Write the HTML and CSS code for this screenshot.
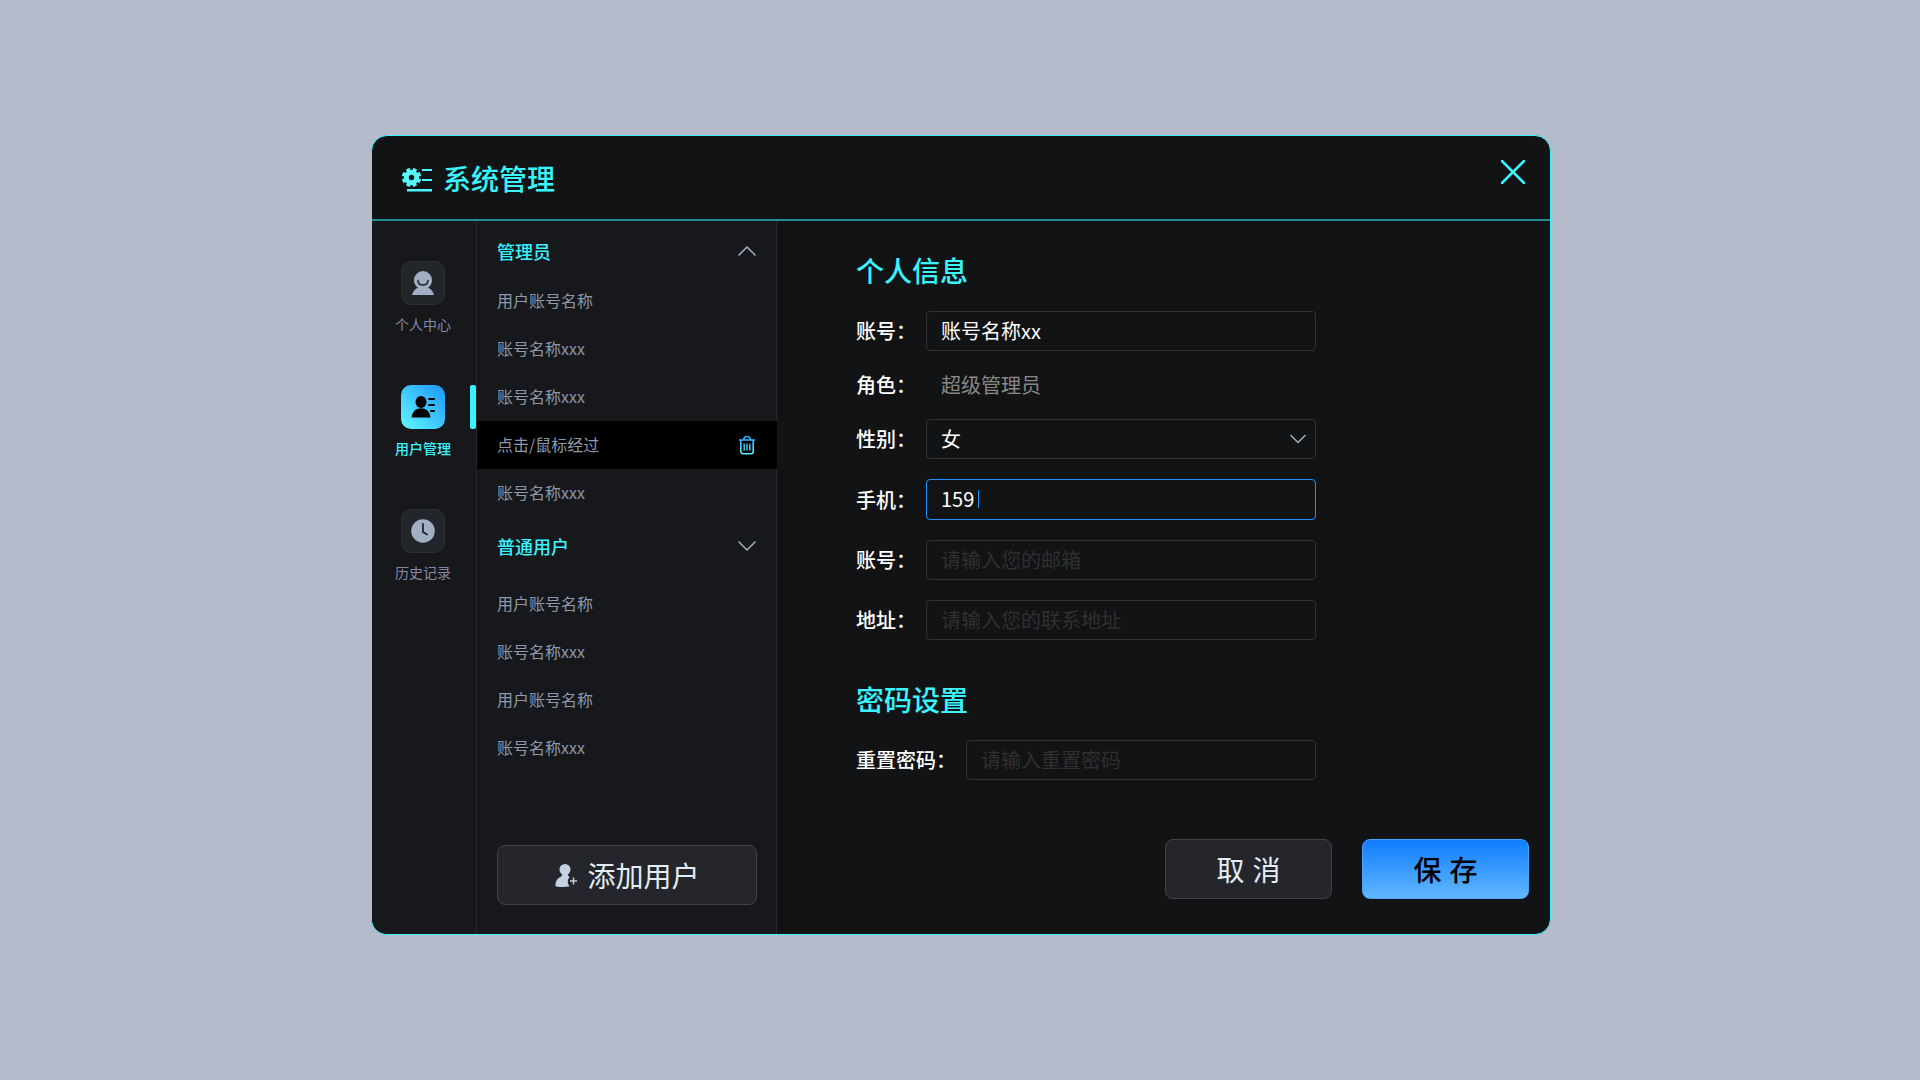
FILE: index.html
```html
<!DOCTYPE html>
<html lang="zh-CN">
  <head>
    <meta charset="utf-8">
    <meta name="viewport" content="width=device-width, initial-scale=1">
    <title>系统管理</title>
    <link rel="stylesheet" href="styles.css">
  </head>

  <body>
    <main class="dialog">
      <header class="dialog-header">
        <svg class="logo" viewBox="0 0 32 26" width="32" height="26">
          <circle cx="10.500" cy="11.500" r="5.200" fill="none" stroke="#58f6ff" stroke-width="5"/>
          <circle cx="10.500" cy="11.500" r="8.200" fill="none" stroke="#58f6ff" stroke-width="3" pathLength="16" stroke-dasharray="1.200 .8" stroke-dashoffset="-.4"/>
          <path fill="#4df5ff" d="M21 3h10v2H21zM21 13h10v2H21zM6 23h25v2.500H6z"/>
        </svg>
        <h1 class="dialog-title">系统管理</h1>
        <button class="close" type="button" aria-label="关闭">
          <svg viewBox="0 0 24 24" width="24" height="24">
            <path d="M1 1l22 22M23 1L1 23" stroke="#3af4ff" stroke-width="2.500" stroke-linecap="round"/>
          </svg>
        </button>
      </header>

      <div class="dialog-body">
        <nav class="sidebar">
          <a class="side-item" href="#">
            <span class="side-icon">
              <svg viewBox="0 0 24 26" width="24" height="26">
                <path fill="#a0afc4" d="M12 1a9 9 0 0 1 9 9c0 3.400-1.500 6.200-4 7.700 2.800.9 4.800 3.300 6 7.300H1c1.200-4 3.200-6.400 6-7.300-2.500-1.500-4-4.300-4-7.700a9 9 0 0 1 9-9z"/>
                <path fill="none" stroke="#22262b" stroke-width="1.600" stroke-linecap="round" d="M7 10.500c.4 6 9.600 6 10 0"/>
              </svg>
            </span>
            个人中心
          </a>
          <a class="side-item active" href="#">
            <span class="side-icon">
              <svg viewBox="0 0 24 22" width="24" height="22">
                <ellipse cx="10" cy="6" rx="5.500" ry="6"/>
                <path d="M.5 21.500C1.500 15 5 12.200 10 12.200s8.500 2.800 9.500 9.300z"/>
                <path stroke="#000" stroke-width="2" stroke-linecap="round" d="M18 3h5M18 9h5M20 15h3"/>
              </svg>
            </span>
            用户管理
          </a>
          <a class="side-item" href="#">
            <span class="side-icon">
              <svg viewBox="0 0 24 24" width="24" height="24">
                <circle cx="12" cy="12" r="11.800" fill="#a0afc4"/>
                <path fill="none" stroke="#22262b" stroke-width="1.800" stroke-linecap="round" d="M12 5v8l4 2.500"/>
              </svg>
            </span>
            历史记录
          </a>
        </nav>

        <section class="users">
          <div class="group">
            <button class="group-head" type="button">
              管理员
              <svg viewBox="0 0 20 10" width="20" height="10"><path d="M1.500 9.500L10 1l8.500 8.500"/></svg>
            </button>
            <ul class="user-list">
              <li><a href="#">用户账号名称</a></li>
              <li><a href="#">账号名称xxx</a></li>
              <li><a href="#">账号名称xxx</a></li>
              <li class="hover">
                <a href="#">点击/鼠标经过</a>
                <button class="delete" type="button" aria-label="删除">
                  <svg viewBox="0 0 18 20" width="18" height="20">
                    <defs>
                      <linearGradient id="trash" gradientUnits="userSpaceOnUse" x1="9" y1="1" x2="9" y2="19">
                        <stop offset="0" stop-color="#2da6ff"/>
                        <stop offset="1" stop-color="#58f2ff"/>
                      </linearGradient>
                    </defs>
                    <path fill="none" stroke="url(#trash)" stroke-width="1.600" d="M1 5h16.010M2.800 5v11.500a2.200 2.200 0 0 0 2.200 2.200h8a2.200 2.200 0 0 0 2.200-2.200V5M5.700 4.500C6 2.200 7 1.500 9 1.500s3 .7 3.300 3"/>
                    <path fill="none" stroke="url(#trash)" stroke-width="1.400" d="M6.200 8.500v7M9.010 8.500l-.02 7M11.800 8.500v7"/>
                  </svg>
                </button>
              </li>
              <li><a href="#">账号名称xxx</a></li>
            </ul>
          </div>

          <div class="group">
            <button class="group-head" type="button">
              普通用户
              <svg viewBox="0 0 20 10" width="20" height="10"><path d="M1.500 .5L10 9 18.500 .5"/></svg>
            </button>
            <ul class="user-list">
              <li><a href="#">用户账号名称</a></li>
              <li><a href="#">账号名称xxx</a></li>
              <li><a href="#">用户账号名称</a></li>
              <li><a href="#">账号名称xxx</a></li>
            </ul>
          </div>

          <button class="btn add-user" type="button">
            <svg viewBox="0 0 24 24" width="24" height="24">
              <circle cx="11" cy="6.500" r="5.500" fill="#c5d1e0"/>
              <path fill="#c5d1e0" d="M8.200 10.500h5.600c0 2 .6 2.600 1.900 3.600a6.500 6.500 0 0 0-.2 9.200c-4 1-11.500 1-14-.3C1.300 17.500 4 15 6.500 13.900 7.800 13.100 8.200 12 8.200 10.500z"/>
              <path stroke="#c5d1e0" stroke-width="1.400" d="M19.500 14.500v7M16 18h7"/>
            </svg>
            添加用户
          </button>
        </section>

        <form class="content">
          <h2>个人信息</h2>
          <div class="row">
            <label for="account">账号：</label>
            <input class="field" id="account" type="text" value="账号名称xx">
          </div>
          <div class="row">
            <label for="role">角色：</label>
            <output class="field plain" id="role">超级管理员</output>
          </div>
          <div class="row">
            <label for="gender">性别：</label>
            <div class="select">
              <select class="field" id="gender">
                <option>女</option>
                <option>男</option>
              </select>
              <svg class="arrow" viewBox="0 0 18 10" width="18" height="10"><path d="M1.500 1L9 8.500 16.500 1"/></svg>
            </div>
          </div>
          <div class="row">
            <label for="phone">手机：</label>
            <div class="field focus">
              <input id="phone" type="tel" value="159">
              <span class="caret"></span>
            </div>
          </div>
          <div class="row">
            <label for="email">账号：</label>
            <input class="field" id="email" type="email" placeholder="请输入您的邮箱">
          </div>
          <div class="row">
            <label for="address">地址：</label>
            <input class="field" id="address" type="text" placeholder="请输入您的联系地址">
          </div>

          <h2>密码设置</h2>
          <div class="row">
            <label for="password">重置密码：</label>
            <input class="field" id="password" type="password" placeholder="请输入重置密码">
          </div>

          <div class="actions">
            <button class="btn" type="button">取 消</button>
            <button class="btn primary" type="submit">保 存</button>
          </div>
        </form>
      </div>
    </main>
  </body>
</html>
```

FILE: styles.css
```css
* {
  box-sizing: border-box;
}

body {
  margin: 0;
  padding: 135px 369px 20px 371px;
  background: #b4bbcb;
}

body, button, input, select {
  font-family: "Noto Sans CJK SC", sans-serif;
}

a {
  color: inherit;
  text-decoration: none;
}

button {
  padding: 0;
  border: none;
  background: none;
  cursor: pointer;
}

h1, h2, ul {
  margin: 0;
  padding: 0;
}

.dialog {
  display: flex;
  flex-direction: column;
  min-height: 800px;
  border: 1px solid #3af4ff;
  border-radius: 16px;
  background: #111315;
  overflow: hidden;
}

/* header */
.dialog-header {
  display: flex;
  align-items: center;
  height: 85px;
  padding: 3px 25px 0 29px;
  border-bottom: 2px solid #268a90;
}

.dialog-title {
  flex: 1;
  margin-left: 10px;
  padding-bottom: 2px;
  color: #3af4ff;
  font-size: 28px;
  font-weight: 500;
  line-height: 40px;
}

.close {
  align-self: flex-start;
  height: 24px;
  margin-top: 21px;
}

.close svg {
  display: block;
}

.dialog-body {
  display: flex;
  flex: 1;
}

/* left menu */
.sidebar {
  display: flex;
  flex-direction: column;
  gap: 51px;
  width: 105px;
  padding-top: 40px;
  border-right: 1px solid #25272c;
  background: #17181c;
}

.side-item {
  display: flex;
  flex-direction: column;
  align-items: center;
  gap: 9px;
  position: relative;
  padding-right: 2px;
  color: #8488a8;
  font-size: 14px;
  line-height: 20px;
}

.side-icon {
  display: flex;
  align-items: center;
  justify-content: center;
  width: 44px;
  height: 44px;
  border: 1px solid #2c3034;
  border-radius: 10px;
  background: #22262b;
}

.side-item.active {
  color: #3af4ff;
  font-weight: 500;
}

.active .side-icon {
  border: none;
  background: linear-gradient(45deg, #62f8ff, #1c96ff);
}

.side-item.active::after {
  content: "";
  position: absolute;
  top: 0;
  right: 0;
  width: 6px;
  height: 44px;
  border-radius: 2px;
  background: #3af4ff;
}

/* user list */
.users {
  display: flex;
  flex-direction: column;
  gap: 5px;
  width: 300px;
  padding-top: 6px;
  background: #17181c;
  box-shadow: inset -1px 0 #25272c;
}

.group-head {
  display: flex;
  align-items: center;
  justify-content: space-between;
  width: 100%;
  height: 50px;
  padding: 0 20px 2px;
  color: #3af4ff;
  font-size: 18px;
  font-weight: 500;
}

.group-head path, .arrow path {
  fill: none;
  stroke: #a0afc4;
  stroke-width: 1.5;
}

.group + .group .user-list {
  margin-top: 8px;
}

.user-list {
  list-style: none;
}

.user-list li {
  display: flex;
  align-items: center;
  justify-content: space-between;
  height: 48px;
  padding: 0 21px 0 20px;
  color: #8d99ad;
  font-size: 16px;
  line-height: 24px;
}

.user-list a {
  padding-bottom: 2px;
}

.user-list .hover {
  background: #000;
}

.delete svg {
  display: block;
}

.btn {
  width: 167px;
  height: 60px;
  border: 1px solid #424347;
  border-radius: 8px;
  background: #25262b;
  color: #e3edf5;
  font-family: "Liberation Sans", "Noto Sans CJK SC", sans-serif;
  font-size: 28px;
}

.add-user {
  display: flex;
  align-items: center;
  justify-content: center;
  gap: 9px;
  width: auto;
  margin: auto 20px 29px;
}

/* form */
.content {
  display: flex;
  flex: 1;
  flex-direction: column;
  gap: 20px;
  padding: 30px 21px 35px 79px;
}

.content h2 {
  padding-bottom: 2px;
  color: #3af4ff;
  font-size: 28px;
  font-weight: 500;
  line-height: 38px;
}

.row + h2 {
  margin-top: 20px;
}

.row {
  display: flex;
  align-items: center;
  gap: 10px;
  max-width: 460px;
  color: #fff;
  font-size: 20px;
  line-height: 28px;
}

.row label {
  font-weight: 500;
}

.field {
  flex: 1;
  min-width: 0;
  height: 40px;
  padding: 0 14px 2px;
  border: 1px solid #303134;
  border-radius: 4px;
  background: transparent;
  color: #fff;
  font-size: 20px;
}

.field::placeholder {
  color: #303030;
}

.field.plain {
  height: 28px;
  padding: 0 15px;
  border: none;
  color: #888;
}

.select {
  display: grid;
  flex: 1;
  align-items: center;
}

.select .field, .arrow {
  grid-area: 1 / 1;
}

.select .field {
  appearance: none;
}

.arrow {
  justify-self: end;
  margin-right: 9px;
  pointer-events: none;
}

.field.focus {
  display: flex;
  align-items: center;
  gap: 4px;
  height: 41px;
  border-color: #1e90ff;
}

.focus input {
  field-sizing: content;
  padding: 0;
  border: none;
  outline: none;
  background: none;
  color: inherit;
  font-size: 20px;
}

.caret {
  width: 1px;
  height: 18px;
  background: #1e90ff;
}

.actions {
  display: flex;
  justify-content: flex-end;
  gap: 30px;
  margin-top: auto;
}

.primary {
  border-color: #4aa3ff;
  background: linear-gradient(#0f7bff, #62b8ff);
  color: #000;
  font-weight: 500;
}
```
